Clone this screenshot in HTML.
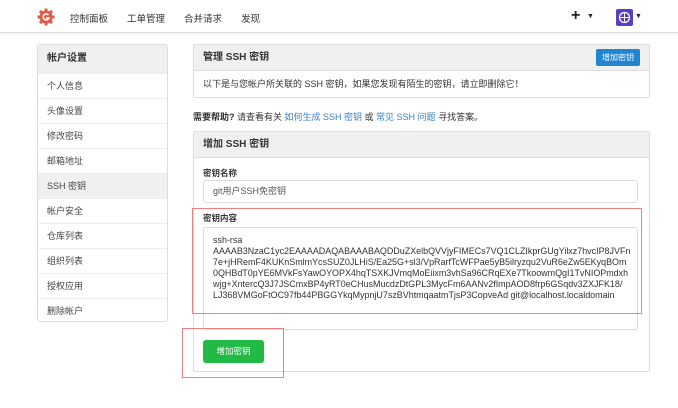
<!DOCTYPE html>
<html><head><meta charset="utf-8"><style>
*{box-sizing:border-box;margin:0;padding:0}
body{width:678px;height:408px;background:#fff;font-family:"Liberation Sans","Noto Sans CJK SC",sans-serif;font-size:9px;color:#333;position:relative;overflow:hidden}
.nav{position:absolute;left:0;top:0;width:678px;height:33px;border-bottom:1px solid #ddd;box-shadow:0 1px 2px rgba(0,0,0,.06)}
.nav span{position:absolute;top:11px;font-size:9.5px;color:#333}
.abs{position:absolute}
.side{left:37px;top:44px;width:131px;height:278px;border:1px solid #ddd;border-radius:3px;overflow:hidden}
.side div{height:25px;line-height:25px;padding-left:9px;border-top:1px solid #eee;font-size:9px;color:#444}
.side .h{height:28px;line-height:28px;background:#f0f0f0;font-weight:bold;font-size:10px;border-top:none;color:#333}
.side .a{background:#f0f0f0}
.panel{border:1px solid #ddd;border-radius:2px}
.ph{background:#f0f0f0;border-bottom:1px solid #ddd;font-weight:bold;font-size:10px;padding-left:9px}
a{color:#3a7fc3;text-decoration:none}
.red{position:absolute;border:1px solid #f08080}
</style></head><body>
<div class="nav">
<svg class="abs" style="left:37px;top:8px" width="18" height="18" viewBox="0 0 18 18"><circle cx="9" cy="9" r="6.5" fill="#e05a45"/><g fill="#e05a45"><rect x="7.5" y="0.5" width="3" height="4"/><rect x="7.5" y="13.5" width="3" height="4"/><rect x="0.5" y="7.5" width="4" height="3"/><rect x="13.5" y="7.5" width="4" height="3"/><rect x="7.5" y="0.5" width="3" height="4" transform="rotate(45 9 9)"/><rect x="7.5" y="0.5" width="3" height="4" transform="rotate(-45 9 9)"/><rect x="7.5" y="13.5" width="3" height="4" transform="rotate(45 9 9)"/><rect x="7.5" y="13.5" width="3" height="4" transform="rotate(-45 9 9)"/></g><path d="M11.5 7 A3 3 0 1 0 12 10 L9 10" stroke="#fff" stroke-width="1.6" fill="none"/></svg>
<span style="left:70px">控制面板</span><span style="left:127px">工单管理</span><span style="left:184px">合并请求</span><span style="left:241px">发现</span>
<span style="left:571px;top:7px;font-size:16px;font-weight:bold;color:#222">+</span><span style="left:587px;top:13px;font-size:7px;color:#222">▼</span>
<div class="abs" style="left:616px;top:9px;width:17px;height:17px;background:#5a3fc0;border-radius:2px"></div>
<svg class="abs" style="left:616px;top:9px" width="17" height="17"><circle cx="8.5" cy="8.5" r="5" stroke="#fff" fill="none" stroke-width="1.3"/><path d="M8.5 3.5V13.5M3.5 8.5H13.5" stroke="#fff" stroke-width="1"/></svg>
<span style="left:635px;top:13px;font-size:7px;color:#222">▼</span>
</div>
<div class="abs side"><div class="h">帐户设置</div><div>个人信息</div><div>头像设置</div><div>修改密码</div><div>邮箱地址</div><div class="a">SSH 密钥</div><div>帐户安全</div><div>仓库列表</div><div>组织列表</div><div>授权应用</div><div>删除帐户</div></div>
<div class="abs panel" style="left:193px;top:44px;width:457px;height:54px">
<div class="ph" style="height:26px;line-height:26px">管理 SSH 密钥</div>
<div class="abs" style="left:402px;top:4px;width:44px;height:17px;background:#2185d0;border-radius:2px;color:#fff;font-size:8px;text-align:center;line-height:17px">增加密钥</div>
<div style="padding-left:9px;line-height:26px;font-size:9px">以下是与您帐户所关联的 SSH 密钥，如果您发现有陌生的密钥，请立即删除它！</div>
</div>
<div class="abs" style="left:193px;top:110px;font-size:9px"><b>需要帮助?</b> 请查看有关 <a>如何生成 SSH 密钥</a> 或 <a>常见 SSH 问题</a> 寻找答案。</div>
<div class="abs panel" style="left:193px;top:131px;width:457px;height:241px">
<div class="ph" style="height:26px;line-height:26px">增加 SSH 密钥</div>
</div>
<div class="abs" style="left:203px;top:167px;font-weight:bold;font-size:8.5px">密钥名称</div>
<div class="abs" style="left:203px;top:180px;width:435px;height:23px;border:1px solid #ddd;border-radius:3px;padding-left:9px;line-height:21px;font-size:9px;color:#555">git用户SSH免密钥</div>
<div class="abs" style="left:203px;top:212px;font-weight:bold;font-size:8.5px">密钥内容</div>
<div class="abs" style="left:203px;top:227px;width:435px;height:103px;border:1px solid #ddd;border-radius:3px;padding:7px 9px;font-size:8.95px;line-height:11px;color:#333;white-space:nowrap;overflow:hidden">ssh-rsa<br>AAAAB3NzaC1yc2EAAAADAQABAAABAQDDuZXelbQVVjyFIMECs7VQ1CLZIkprGUgYilxz7hvcIP8JVFn<br>7e+jHRemF4KUKnSmlmYcsSUZ0JLHiS/Ea25G+sl3/VpRarfTcWFPae5yB5ilryzqu2VuR6eZw5EKyqBOm<br>0QHBdT0pYE6MVkFsYawOYOPX4hqTSXKJVmqMoEiixm3vhSa96CRqEXe7TkoowmQgI1TvNIOPmdxh<br>wjg+XntercQ3J7JSCmxBP4yRT0eCHusMucdzDtGPL3MycFm6AANv2fImpAOD8frp6GSqdv3ZXJFK18/<br>LJ368VMGoFtOC97fb44PBGGYkqMypnjU7szBVhtmqaatmTjsP3CopveAd git@localhost.localdomain</div>
<div class="abs" style="left:203px;top:340px;width:61px;height:23px;background:#21ba45;border-radius:3px;color:#fff;font-size:8.5px;text-align:center;line-height:23px">增加密钥</div>
<div class="red" style="left:192px;top:208px;width:450px;height:106px"></div>
<div class="red" style="left:182px;top:328px;width:102px;height:50px"></div>
</body></html>
